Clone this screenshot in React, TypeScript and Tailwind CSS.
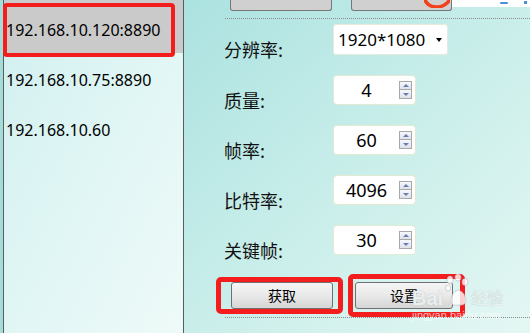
import React from "react";

const cjk = "font-['Noto_Sans_CJK_SC','Noto_Sans',sans-serif]";
const num = "font-['Noto_Sans','Noto_Sans_CJK_SC',sans-serif]";

function Spinner() {
  return (
    <div className="flex flex-col w-[13px] h-[18px] mr-[3px]">
      <div className="h-[9px] border border-[#a8a8a8] bg-gradient-to-b from-[#f6f8fb] to-[#dde3ea] flex items-center justify-center">
        <div className="w-0 h-0 border-l-[3px] border-r-[3px] border-b-[3px] border-l-transparent border-r-transparent border-b-[#6b7bb5]" />
      </div>
      <div className="h-[9px] border border-t-0 border-[#a8a8a8] bg-gradient-to-b from-[#f6f8fb] to-[#dde3ea] flex items-center justify-center">
        <div className="w-0 h-0 border-l-[3px] border-r-[3px] border-t-[3px] border-l-transparent border-r-transparent border-t-[#6b7bb5]" />
      </div>
    </div>
  );
}

function SpinBox({ value }: { value: string }) {
  return (
    <div className="w-[83px] h-[30px] bg-white border border-[#e2ead2] rounded-[4px] flex items-center">
      <span className={`${num} flex-1 text-center text-[18px] leading-none text-black`}>{value}</span>
      <Spinner />
    </div>
  );
}

function Label({ text }: { text: string }) {
  return (
    <div className={`${cjk} w-[109px] pt-[14px] text-[18px] leading-[22px] text-[#111]`}>{text}</div>
  );
}

export default function App() {
  const ips = ["192.168.10.75:8890", "192.168.10.60"];
  const spins: [string, string][] = [
    ["质量:", "4"],
    ["帧率:", "60"],
    ["比特率:", "4096"],
    ["关键帧:", "30"],
  ];
  return (
    <div className="w-[530px] h-[333px] overflow-hidden flex relative bg-white">
      {/* Left list panel */}
      <div className="w-[184px] h-full flex bg-[#a3dcd8] pl-[3px]">
        <div className="flex-1 relative border-l border-r border-[#5c5c5c] bg-gradient-to-br from-[#d2eff0] via-[#e0f6f5] to-[#eefaf8]">
          <div className={`${num} h-[53px] pt-[7px] pl-[2px] flex items-center bg-[#cacaca] text-[16px] text-black`}>
            192.168.10.120:8890
          </div>
          {ips.map((ip) => (
            <div key={ip} className={`${num} h-[50px] pt-[4px] pl-[2px] flex items-center text-[16px] text-black`}>
              {ip}
            </div>
          ))}
          {/* annotation */}
          <div className="absolute left-[-1px] top-[3px] w-[172px] h-[54px] border-[4px] border-[#f41d1d] rounded-[4px]" />
        </div>
      </div>

      {/* Right settings panel */}
      <div className="flex-1 h-full relative bg-gradient-to-br from-[#abe2e0] via-[#c9eeea] to-[#e4f7f3]">
        {/* cut-off top buttons */}
        <div className="h-[11px] flex items-start pl-[46px]">
          <div className="w-[102px] h-[11px] bg-[#d0d0d0] border border-t-0 border-[#777] rounded-b-[3px]" />
          <div className="ml-[19px] w-[101px] h-[11px] bg-[#d0d0d0] border border-t-0 border-[#777] rounded-b-[3px] relative">
            <svg className="absolute left-[72px] top-0" width="26" height="8" viewBox="0 0 26 8">
              <path d="M1 0 Q4 7 13 7 Q20 7 25 1" fill="none" stroke="#f0401c" strokeWidth="3.5" strokeLinecap="round" />
            </svg>
          </div>
          <div className="flex-1 h-[7px] bg-white relative">
            <div className="absolute left-[48px] top-[2px] w-[8px] h-[2px] rounded-full bg-[#4a8fd8]" />
            <div className="absolute left-[72px] top-[1px] w-[3px] h-[3px] bg-[#4a8fd8]" />
          </div>
        </div>
        <div className="mt-[7px] ml-[41px] border-t border-dotted border-[#8a8a8a]" />

        {/* form */}
        <div className="mt-[5px] pl-[40px]">
          <div className="h-[51px] flex">
            <Label text="分辨率:" />
            <div className="w-[115px] h-[31px] bg-white border border-[#e6ecdc] rounded-[3px] flex items-center justify-between pl-[4px] pr-[5px]">
              <span className={`${num} text-[17px] leading-none text-black`}>1920*1080</span>
              <div className="w-0 h-0 border-l-[3px] border-r-[3px] border-t-[4px] border-l-transparent border-r-transparent border-t-black" />
            </div>
          </div>
          {spins.map(([l, v]) => (
            <div key={l} className="h-[50px] flex">
              <Label text={l} />
              <SpinBox value={v} />
            </div>
          ))}
        </div>

        {/* action buttons */}
        <div className="mt-[7px] pl-[47px] flex">
          <div className="relative">
            <button className={`${cjk} w-[102px] h-[27px] text-[14px] text-black bg-gradient-to-b from-[#f5f5f5] via-[#e9e9e9] to-[#d5d5d5] border border-[#707070] rounded-[3px]`}>
              获取
            </button>
            <div className="absolute left-[-15px] top-[-5px] right-[-10px] bottom-[-5px] border-[5px] border-[#f41d1d] rounded-[5px]" />
          </div>
          <div className="relative ml-[22px]">
            <button className={`${cjk} w-[98px] h-[27px] text-[14px] text-black bg-gradient-to-b from-[#f5f5f5] via-[#e9e9e9] to-[#d5d5d5] border border-[#707070] rounded-[3px]`}>
              设置
            </button>
            <div className="absolute left-[-7px] top-[-8px] right-[-12px] bottom-[-8px] border-[5px] border-[#f41d1d] rounded-[5px]" />
          </div>
        </div>
        <div className="mt-[8px] ml-[41px] border-t border-dotted border-[#8a8a8a]" />

        {/* watermark */}
        <div className="absolute left-[228px] top-[274px] pointer-events-none text-white/80">
          <div className="flex items-end">
            <span className="font-['Liberation_Sans',sans-serif] font-bold text-[20px] leading-none [text-shadow:0_0_1px_#9aa]">Bai</span>
            <svg width="26" height="34" viewBox="0 0 26 34" className="mx-[1px]">
              <g fill="rgba(255,255,255,0.8)" stroke="#aab" strokeWidth="0.5">
                <ellipse cx="6" cy="6" rx="3" ry="4" />
                <ellipse cx="14" cy="3.5" rx="3" ry="3.5" />
                <ellipse cx="21" cy="8" rx="3" ry="3.5" />
                <ellipse cx="4" cy="14" rx="2.6" ry="3" />
                <path d="M7 28 Q7 18 14 16 Q22 18 22 28 Q20 32 14 31 Q8 32 7 28 Z" />
              </g>
            </svg>
            <span className={`${cjk} text-[16px] leading-none mb-[3px] [text-shadow:0_0_1px_#9aa]`}>经验</span>
          </div>
          <div className="font-['Liberation_Sans',sans-serif] text-[11px] leading-none mt-[2px] text-white/70">jingyan.baidu.com</div>
        </div>
      </div>
    </div>
  );
}
